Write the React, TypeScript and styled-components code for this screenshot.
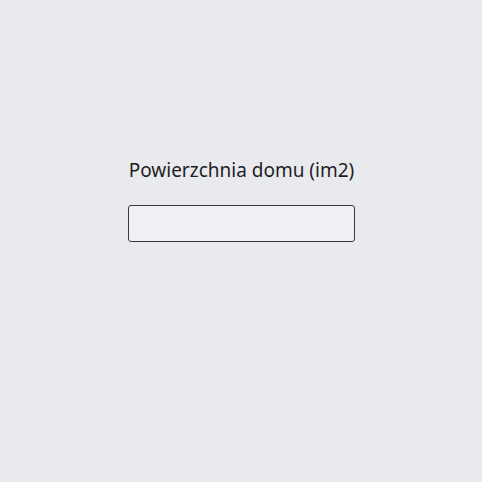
import React from 'react';
import styled, { createGlobalStyle } from 'styled-components';

const GlobalStyle = createGlobalStyle`
  html, body {
    margin: 0;
    padding: 0;
    background: #e9eaee;
  }
  body {
    font-family: 'Noto Sans', 'Open Sans', sans-serif;
  }
`;

const Page = styled.div`
  width: 482px;
  height: 482px;
  display: flex;
  flex-direction: column;
  align-items: center;
  padding-top: 156px;
  padding-left: 1px;
  box-sizing: border-box;
`;

const Label = styled.label`
  font-size: 19px;
  line-height: 28px;
  color: #1e1e1e;
  margin-bottom: 21px;
`;

const Field = styled.input`
  width: 227px;
  height: 37px;
  box-sizing: border-box;
  border: 1px solid #3a3a3a;
  border-radius: 3px;
  background: #eef0f3;
  outline: none;
  font: inherit;
`;

const App = () => (
  <>
    <GlobalStyle />
    <Page>
      <Label htmlFor="area">Powierzchnia domu (im2)</Label>
      <Field id="area" type="text" />
    </Page>
  </>
);

export default App;
